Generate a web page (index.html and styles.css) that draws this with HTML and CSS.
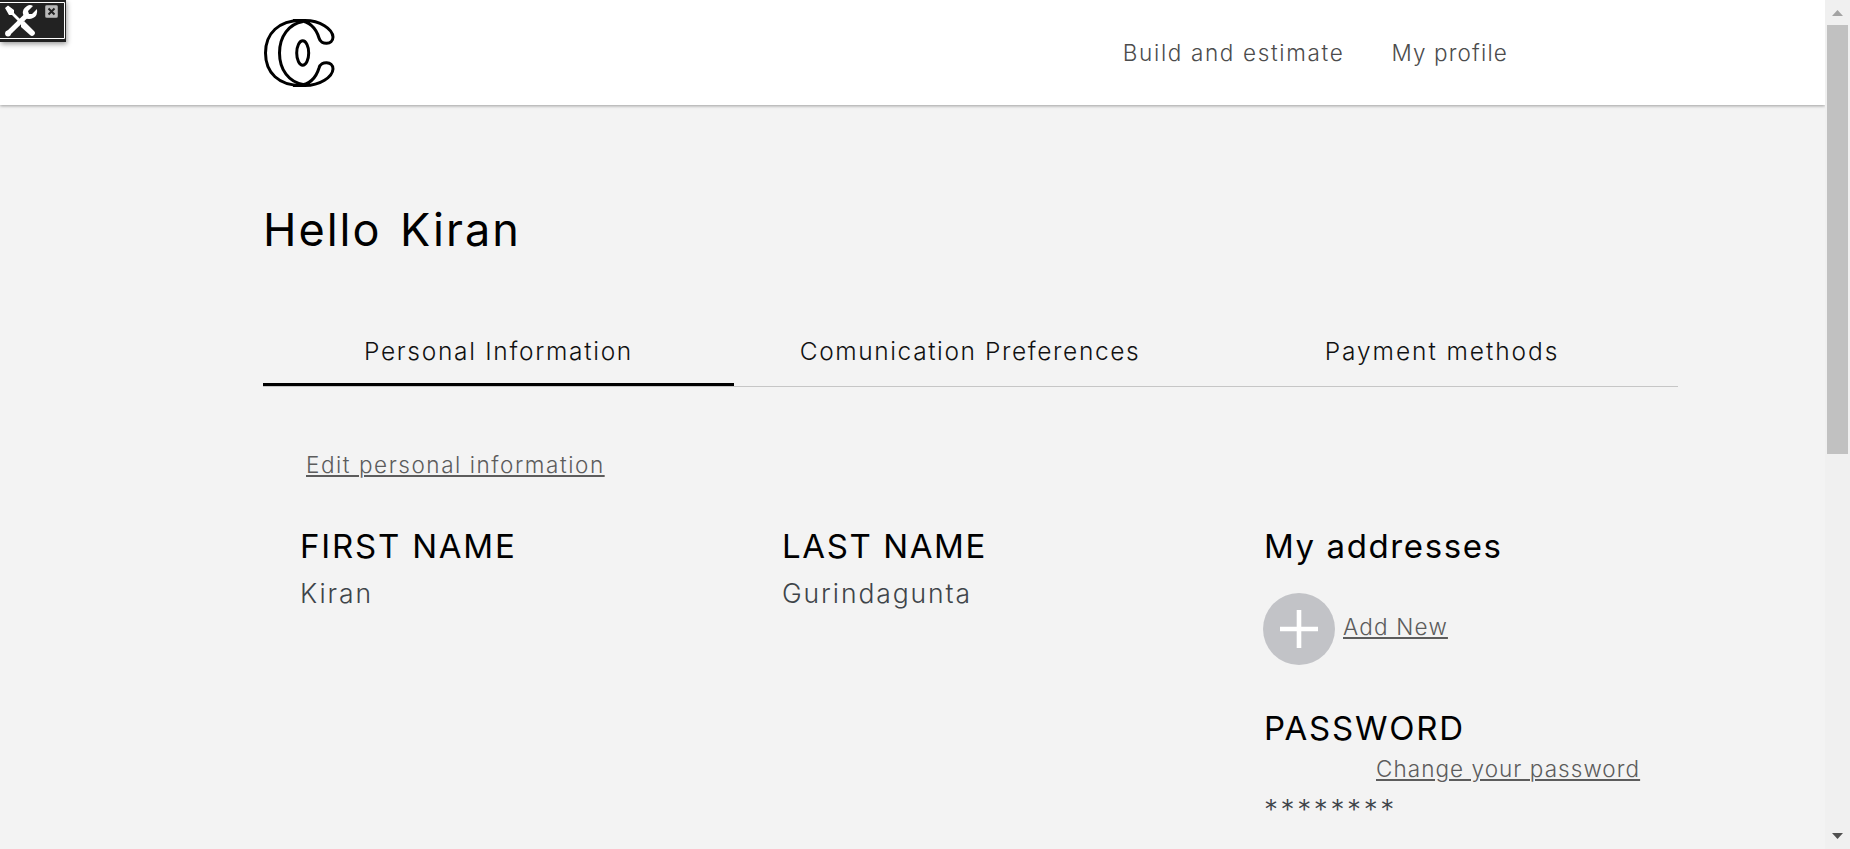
FILE: index.html
```
<!DOCTYPE html>
<html lang="en">
<head>
<meta charset="utf-8">
<title>My profile</title>
<link rel="stylesheet" href="styles.css">
</head>
<body>
<div class="page">
  <header class="header">
    <svg class="logo" viewBox="0 0 74 72" fill="none" stroke="#000" stroke-width="3">
      <path d="M38 3.500C16 3.500 2.500 16 2.500 36S16 68.500 38 68.500"/>
      <path d="M40 4.500C26 7 16.500 19 16.500 36S26 65 40 67.500"/>
      <path d="M30 3.500H42C57 3.500 69.500 12 70 20C70 28 58 28.500 56 21C53 11 46 4.500 36 3.500"/>
      <path d="M30 68.500H42C57 68.500 69.500 60 70 52C70 44 58 43.500 56 51C53 61 46 67.500 36 68.500"/>
      <ellipse cx="39.700" cy="36" rx="6" ry="12.200"/>
    </svg>
    <nav class="nav">
      <a class="nav-build">Build and estimate</a>
      <a class="nav-profile">My profile</a>
    </nav>
  </header>
  <main class="main">
    <h1 class="greeting">Hello Kiran</h1>
    <div class="tabs">
      <a class="tab tab-active"><span class="tab-personal">Personal Information</span></a>
      <a class="tab"><span class="tab-comm">Comunication Preferences</span></a>
      <a class="tab"><span class="tab-pay">Payment methods</span></a>
    </div>
    <div class="edit-row"><a class="link edit">Edit personal information</a></div>
    <div class="columns">
      <section><h2 class="first">FIRST NAME</h2><p class="value kiran">Kiran</p></section>
      <section><h2 class="last">LAST NAME</h2><p class="value surname">Gurindagunta</p></section>
      <section>
        <h2 class="addresses">My addresses</h2>
        <div class="add-row">
          <svg class="plus" viewBox="0 0 72 72"><circle cx="36" cy="36" r="36" fill="#c2c3c7"/><path d="M17 36H55M36 17V55" stroke="#fff" stroke-width="4.600"/></svg>
          <a class="link add">Add New</a>
        </div>
        <h2 class="password">PASSWORD</h2>
        <div class="change-row"><a class="link change">Change your password</a></div>
        <p class="stars">********</p>
      </section>
    </div>
  </main>
</div>
<aside class="scrollbar">
  <svg class="arrow" viewBox="0 0 11 6"><path d="M0 6L5.500 0L11 6Z" fill="#a3a3a3"/></svg>
  <div class="thumb"></div>
  <svg class="arrow" viewBox="0 0 11 6"><path d="M0 0L5.500 6L11 0Z" fill="#505050"/></svg>
</aside>
<div class="toolbox">
  <svg width="66" height="42" viewBox="0 0 66 42">
    <rect width="66" height="42" fill="#222"/>
    <path d="M0 2.500H64.500V38.500H0" fill="none" stroke="#fff"/>
    <path d="M5 8L8 5.500L14 10V13L24 23L22 25L12 15H9Z" fill="#fff"/>
    <path d="M21 24L24 21L34 31Q36 33 34 35Q32 37 30 35L21 27Z" fill="#fff"/>
    <path d="M8 33.500L28 14" stroke="#fff" stroke-width="5"/>
    <circle cx="8" cy="33.500" r="2.900" fill="#fff"/>
    <path d="M33 6L28 11L29 14L32 14L37 9Q38 16 33 18Q29 20 25 18L23 14Q22 9 27 6Q30 4 33 6Z" fill="#fff"/>
    <rect x="45.500" y="5.500" width="12" height="12" rx="1" fill="#bbb" stroke="#999"/>
    <path d="M48.500 8.500L54.500 14.500M54.500 8.500L48.500 14.500" stroke="#222" stroke-width="2"/>
  </svg>
</div>
</body>
</html>
```
FILE: styles.css
```
* { box-sizing: border-box; }
body { margin: 0; display: flex; height: 849px; overflow: hidden; background: #f3f3f3; font-family: Inter, "Liberation Sans", sans-serif; font-weight: 300; }
h1, h2, p { margin: 0; font-weight: 400; white-space: nowrap; }
p { font-weight: 300; }
a { white-space: nowrap; }
.page { flex: 1; min-width: 0; }
.header { height: 105px; background: #fff; box-shadow: 0 1px 3px rgba(0, 0, 0, .35); display: flex; justify-content: space-between; padding: 17px 317px 0 263px; }
.logo { width: 74px; height: 72px; }
.nav { display: flex; gap: 47px; padding-top: 22px; font-size: 22.5px; line-height: 28px; color: #4c4c4c; }
.nav-build { letter-spacing: 1.65px; }
.nav-profile { letter-spacing: 1.15px; }
.main { padding: 95px 147px 0 263px; }
.greeting { font-size: 45px; line-height: 60px; color: #000; letter-spacing: 2px; word-spacing: 4px; }
.tabs { display: grid; grid-template-columns: 471px 472px 472px; margin-top: 72px; height: 55px; border-bottom: 1px solid #c6c6c6; }
.tab { text-align: center; font-size: 24.5px; line-height: 39px; color: #111; }
.tab-personal { letter-spacing: 1.7px; }
.tab-comm { letter-spacing: 1.6px; }
.tab-pay { letter-spacing: 1.95px; }
.tab-active { border-bottom: 3px solid #000; }
.link { font-size: 22.5px; line-height: 28px; color: #5c5c5c; text-decoration: underline; text-decoration-thickness: 2px; text-underline-offset: 2px; }
.edit { letter-spacing: 1.55px; }
.edit-row { padding: 64px 0 0 43px; height: 106px; }
.columns { display: grid; grid-template-columns: 482px 482px 1fr; padding: 33px 0 0 37px; }
.columns h2 { font-size: 33px; line-height: 40px; color: #000; }
.columns .first { letter-spacing: 1.8px; }
.columns .last { letter-spacing: 1.6px; }
.columns .addresses { letter-spacing: 1.6px; }
.columns .password { margin-top: 43px; letter-spacing: 1.8px; }
.value { font-size: 26.5px; line-height: 36px; color: #3e4449; margin-top: 9px; letter-spacing: 1.9px; }
.add-row { display: flex; height: 72px; margin: 27px 0 0 -1px; gap: 8px; }
.plus { width: 72px; height: 72px; }
.add { padding-top: 20px; letter-spacing: 1.2px; }
.change-row { display: flex; padding-left: 112px; margin-top: 7px; }
.change { letter-spacing: 1.05px; }
.stars { font-size: 28px; line-height: 36px; color: #3e4449; letter-spacing: 2.6px; margin-top: 9px; }
.scrollbar { width: 25px; background: #f0f0f0; display: flex; flex-direction: column; align-items: center; padding: 10px 0; }
.arrow { width: 11px; height: 6px; }
.thumb { width: 21px; height: 429px; background: #c1c1c1; margin: 9px 0 379px; }
.toolbox { position: absolute; left: 0; top: 0; width: 66px; height: 42px; box-shadow: 1px 2px 5px rgba(0, 0, 0, .4); }
.toolbox svg { display: block; }
```
